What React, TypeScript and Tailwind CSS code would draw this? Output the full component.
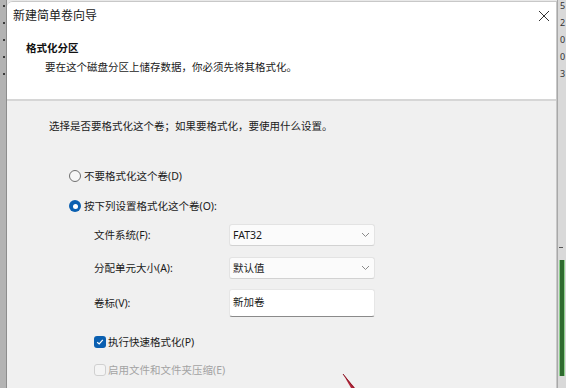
import React from "react";

const FONT = '"Segoe UI", "Noto Sans", "Noto Sans CJK SC", sans-serif';

function Radio({ checked, label }: { checked?: boolean; label: string }) {
  return (
    <div className="flex items-center h-[14px]">
      {checked ? (
        <div className="w-[12px] h-[12px] rounded-full bg-[#0a5fb0] flex items-center justify-center">
          <div className="w-[5px] h-[5px] rounded-full bg-white" />
        </div>
      ) : (
        <div className="w-[12px] h-[12px] rounded-full border border-[#6f6f6f] bg-[#f7f7f7]" />
      )}
      <span className="ml-[3px] text-[10.5px] leading-[14px] text-[#1a1a1a]">{label}</span>
    </div>
  );
}

function Chevron() {
  return (
    <svg width="9" height="6" viewBox="0 0 9 6" className="mr-[4px]">
      <path d="M1 1 L4.5 4.5 L8 1" fill="none" stroke="#8a8a8a" strokeWidth="1" />
    </svg>
  );
}

function Field({ label, value, kind }: { label: string; value: string; kind: "select" | "text" }) {
  return (
    <div className="flex items-center">
      <div className="w-[135px] text-[10.5px] leading-[14px] text-[#1a1a1a]">{label}</div>
      {kind === "select" ? (
        <div className="w-[146px] h-[22px] flex items-center justify-between bg-[#fbfbfb] border border-[#e3e3e3] border-b-[#d2d2d2] rounded-[3px] pl-[3px]">
          <span className="text-[10.5px] leading-[14px] text-[#1a1a1a]">{value}</span>
          <Chevron />
        </div>
      ) : (
        <div className="w-[146px] h-[28px] flex items-start pt-[5px] bg-white border border-[#e6e6e6] border-b-[#8a8a8a] rounded-[3px] pl-[3px]">
          <span className="text-[10.5px] leading-[14px] text-[#1a1a1a]">{value}</span>
        </div>
      )}
    </div>
  );
}

export default function App() {
  return (
    <div
      className="relative w-[566px] h-[388px] overflow-hidden flex bg-[#e9e9e9]"
      style={{ fontFamily: FONT }}
    >
      {/* left background strip */}
      <div className="w-[7px] h-full bg-[#b3b3b3] flex flex-col items-start pl-[3px] pt-[5px] gap-[15px] border-r border-[#8d8d8d]">
        <div className="w-[2px] h-[2px] bg-[#3c3c3c]" />
        <div className="w-[2px] h-[2px] bg-[#3c3c3c]" />
        <div className="w-[2px] h-[2px] bg-[#3c3c3c]" />
        <div className="w-[2px] h-[2px] bg-[#3c3c3c]" />
        <div className="w-[2px] h-[2px] bg-[#3c3c3c]" />
      </div>

      {/* dialog */}
      <div className="flex-1 flex flex-col mt-[1px] rounded-tl-[6px] border-t border-r border-[#c8c8c8] bg-[#f0f0f0] overflow-hidden">
        <div className="h-[99px] bg-white flex flex-col border-b-2 border-[#d6d6d6]">
          <div className="h-[27px] flex items-center justify-between pl-[6px] pr-[6px]">
            <span className="text-[12px] leading-[16px] text-[#1a1a1a]">新建简单卷向导</span>
            <svg width="12" height="12" viewBox="0 0 12 12">
              <path d="M1 1 L11 11 M11 1 L1 11" stroke="#333" strokeWidth="1" />
            </svg>
          </div>
          <div className="mt-[12px] pl-[19px] text-[10.5px] leading-[14px] font-bold text-[#111]">格式化分区</div>
          <div className="mt-[5px] pl-[38px] text-[10.5px] leading-[14px] text-[#1a1a1a]">
            要在这个磁盘分区上储存数据，你必须先将其格式化。
          </div>
        </div>

        <div className="flex flex-col pl-[42px] pt-[18px]">
          <div className="text-[10.5px] leading-[14px] text-[#1a1a1a]">
            选择是否要格式化这个卷；如果要格式化，要使用什么设置。
          </div>
          <div className="mt-[36px] ml-[20px]">
            <Radio label="不要格式化这个卷(D)" />
          </div>
          <div className="mt-[16px] ml-[20px]">
            <Radio checked label="按下列设置格式化这个卷(O):" />
          </div>
          <div className="ml-[45px] flex flex-col">
            <div className="mt-[11px]">
              <Field label="文件系统(F):" value="FAT32" kind="select" />
            </div>
            <div className="mt-[11px]">
              <Field label="分配单元大小(A):" value="默认值" kind="select" />
            </div>
            <div className="mt-[10px]">
              <Field label="卷标(V):" value="新加卷" kind="text" />
            </div>
            <div className="mt-[18px] flex items-center h-[14px]">
              <div className="w-[12px] h-[12px] rounded-[3px] bg-[#0a5fb0] flex items-center justify-center">
                <svg width="8" height="8" viewBox="0 0 8 8">
                  <path d="M1.2 4.2 L3.2 6 L6.8 1.8" fill="none" stroke="white" strokeWidth="1.2" />
                </svg>
              </div>
              <span className="ml-[2px] text-[10.5px] leading-[14px] text-[#1a1a1a]">执行快速格式化(P)</span>
            </div>
            <div className="mt-[14px] flex items-center h-[14px]">
              <div className="w-[12px] h-[12px] rounded-[3px] border border-[#d0d0d0] bg-[#f4f4f4]" />
              <span className="ml-[2px] text-[10.5px] leading-[14px] text-[#a3a3a3]">启用文件和文件夹压缩(E)</span>
            </div>
          </div>
        </div>
      </div>

      {/* right background strip */}
      <div className="w-[9px] h-full bg-[#d9d9d9] border-l border-[#a8a8a8] flex flex-col">
        <div className="flex flex-col pl-[2px] text-[9px] leading-[17px] text-[#333] -mt-[3px]">
          <span>5</span>
          <span>2</span>
          <span>0</span>
          <span>0</span>
          <span>3</span>
        </div>
        <div className="mt-[165px] ml-[1px] w-[4px] h-[1px] bg-[#555]" />
        <div className="mt-[12px] ml-[1px] w-[6px] h-[116px] bg-[#2f6b2f] border-l border-r border-[#8fd08f]" />
      </div>

      {/* red arrow fragment */}
      <svg className="absolute left-[338px] top-[370px]" width="22" height="18" viewBox="0 0 22 18">
        <path d="M5 4 L17 18 L13 18 Z" fill="#b3263a" />
        <path d="M5 4 L16 18" stroke="#8c1a2a" strokeWidth="1" />
      </svg>
    </div>
  );
}
